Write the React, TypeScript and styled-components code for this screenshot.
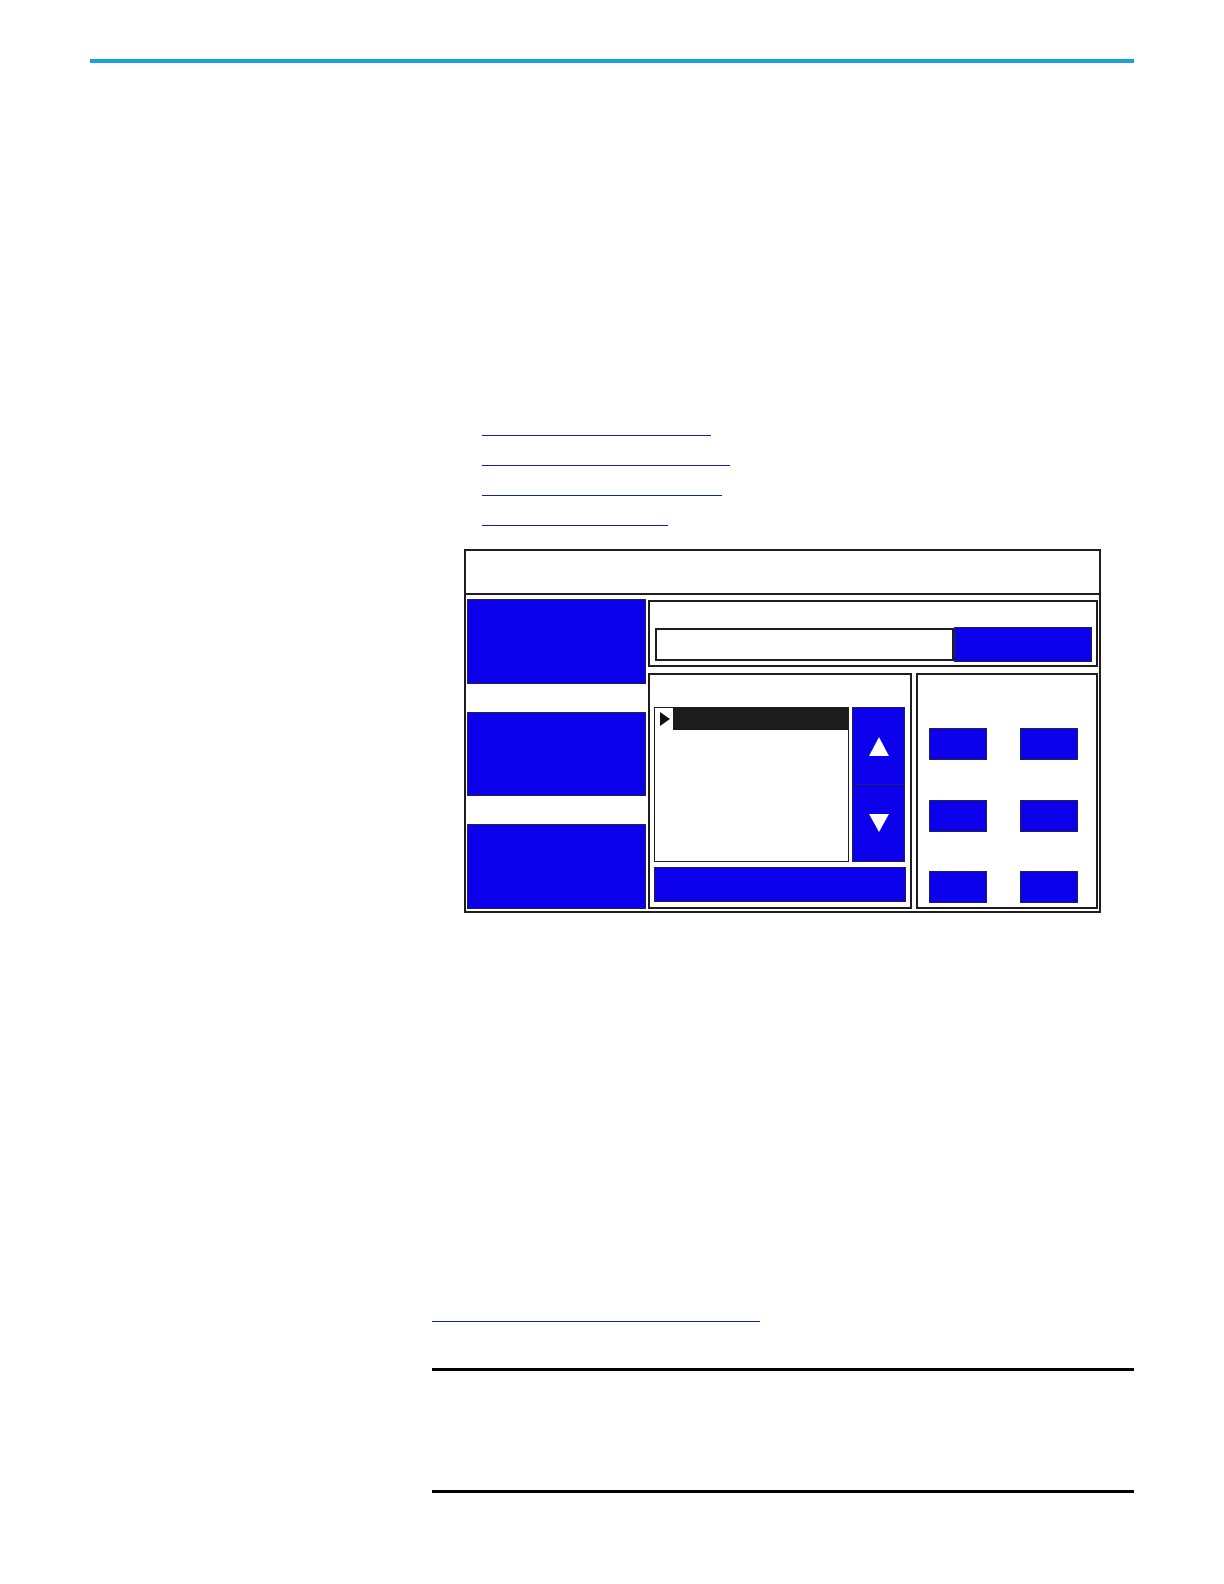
import styled, { createGlobalStyle } from "styled-components";

const GlobalStyle = createGlobalStyle`
  html, body {
    margin: 0;
    padding: 0;
    background: #ffffff;
    font-family: "Liberation Sans", Arial, sans-serif;
  }
  * {
    box-sizing: border-box;
  }
`;

const BLUE = "#0c00ec";
const INK = "#1e1e1e";
const BTN_EDGE = "#23234a";

const Page = styled.div`
  width: 1224px;
  min-height: 1584px;
  padding: 59px 90px 0;
`;

const TopRule = styled.div`
  width: 1044px;
  height: 4px;
  background: #1ba1da;
`;

const Column = styled.div`
  margin-left: 342px;
  width: 702px;
`;

const LinkList = styled.nav`
  margin-top: 343px;
  padding-left: 50px;
  display: flex;
  flex-direction: column;
`;

const DocLink = styled.a<{ $w: number }>`
  display: block;
  width: ${(p) => p.$w}px;
  height: 30px;
  border-bottom: 1px solid #12229c;
  color: #12229c;
  text-decoration: none;
`;

/* ---------- terminal screen diagram ---------- */

const Screen = styled.div`
  margin-top: 23px;
  margin-left: 32px;
  width: 637px;
  height: 364px;
  border: 2px solid ${INK};
  display: flex;
  flex-direction: column;
`;

const ScreenHeader = styled.div`
  height: 44px;
  border-bottom: 2px solid ${INK};
`;

const ScreenBody = styled.div`
  flex: 1;
  display: flex;
`;

const NavColumn = styled.div`
  width: 179px;
  margin-left: 1px;
  padding: 4px 0 2px;
  display: flex;
  flex-direction: column;
  justify-content: space-between;
`;

const BlueKey = styled.div<{ $w?: number; $h: number }>`
  width: ${(p) => (p.$w ? `${p.$w}px` : "100%")};
  height: ${(p) => p.$h}px;
  background: ${BLUE};
  border: 1px solid ${BTN_EDGE};
`;

const WorkArea = styled.div`
  margin-left: 2px;
  width: 450px;
  padding-top: 5px;
  display: flex;
  flex-direction: column;
`;

const EntryPanel = styled.div`
  height: 67px;
  border: 2px solid ${INK};
  padding: 25px 4px 0 5px;
`;

const EntryRow = styled.div`
  display: flex;
  align-items: center;
  height: 35px;
`;

const EntryField = styled.div`
  width: 299px;
  height: 33px;
  border: 2px solid ${INK};
  background: #fff;
`;

const LowerRow = styled.div`
  margin-top: 6px;
  height: 236px;
  display: flex;
  gap: 4px;
`;

const ListPanel = styled.div`
  width: 264px;
  border: 2px solid ${INK};
  padding: 32px 4px 0;
`;

const ListRow = styled.div`
  display: flex;
  gap: 3px;
  height: 155px;
`;

const ListBox = styled.div`
  width: 195px;
  height: 155px;
  border: 1px solid ${INK};
  background: #fff;
`;

const ListItem = styled.div`
  display: flex;
  height: 22px;
`;

const Marker = styled.div`
  width: 18px;
  display: flex;
  align-items: center;
  padding-left: 5px;

  &::before {
    content: "";
    width: 0;
    height: 0;
    border-top: 7px solid transparent;
    border-bottom: 7px solid transparent;
    border-left: 10px solid #111;
  }
`;

const ItemFill = styled.div`
  flex: 1;
  background: #1c1c1c;
`;

const Scroller = styled.div`
  width: 53px;
  display: flex;
  flex-direction: column;
`;

const ScrollKey = styled.div<{ $dir: "up" | "down"; $h: number }>`
  height: ${(p) => p.$h}px;
  background: ${BLUE};
  border: 1px solid ${BTN_EDGE};
  ${(p) => (p.$dir === "down" ? "border-top: none;" : "")}
  display: flex;
  align-items: center;
  justify-content: center;

  &::before {
    content: "";
    width: 0;
    height: 0;
    border-left: 10px solid transparent;
    border-right: 10px solid transparent;
    ${(p) =>
      p.$dir === "up"
        ? "border-bottom: 19px solid #ffffff;"
        : "border-top: 18px solid #ffffff;"}
  }
`;

const StatusBar = styled.div`
  margin-top: 5px;
  width: 252px;
  height: 35px;
  background: ${BLUE};
  border: 1px solid ${BTN_EDGE};
`;

const KeyPanel = styled.div`
  flex: 1;
  border: 2px solid ${INK};
  padding: 53px 0 0 11px;
  display: grid;
  grid-template-columns: 58px 58px;
  grid-auto-rows: 32px;
  column-gap: 33px;
  row-gap: 39.5px;
  align-content: start;
`;

/* ---------- lower part of the page ---------- */

const RefLink = styled(DocLink)`
  margin-top: 379px;
`;

const TableRule = styled.div<{ $gap: number }>`
  margin-top: ${(p) => p.$gap}px;
  width: 702px;
  height: 3px;
  background: #000;
`;

const links = [229, 248, 240, 186];

export default function App() {
  return (
    <>
      <GlobalStyle />
      <Page>
        <TopRule />
        <Column>
          <LinkList>
            {links.map((w, i) => (
              <DocLink key={i} $w={w} href="#" />
            ))}
          </LinkList>

          <Screen>
            <ScreenHeader />
            <ScreenBody>
              <NavColumn>
                <BlueKey $h={85} />
                <BlueKey $h={84} />
                <BlueKey $h={85} />
              </NavColumn>
              <WorkArea>
                <EntryPanel>
                  <EntryRow>
                    <EntryField />
                    <BlueKey $w={138} $h={35} />
                  </EntryRow>
                </EntryPanel>
                <LowerRow>
                  <ListPanel>
                    <ListRow>
                      <ListBox>
                        <ListItem>
                          <Marker />
                          <ItemFill />
                        </ListItem>
                      </ListBox>
                      <Scroller>
                        <ScrollKey $dir="up" $h={78} />
                        <ScrollKey $dir="down" $h={77} />
                      </Scroller>
                    </ListRow>
                    <StatusBar />
                  </ListPanel>
                  <KeyPanel>
                    {Array.from({ length: 6 }).map((_, i) => (
                      <BlueKey key={i} $h={32} />
                    ))}
                  </KeyPanel>
                </LowerRow>
              </WorkArea>
            </ScreenBody>
          </Screen>

          <RefLink $w={328} href="#" />
          <TableRule $gap={46} />
          <TableRule $gap={119} />
        </Column>
      </Page>
    </>
  );
}
